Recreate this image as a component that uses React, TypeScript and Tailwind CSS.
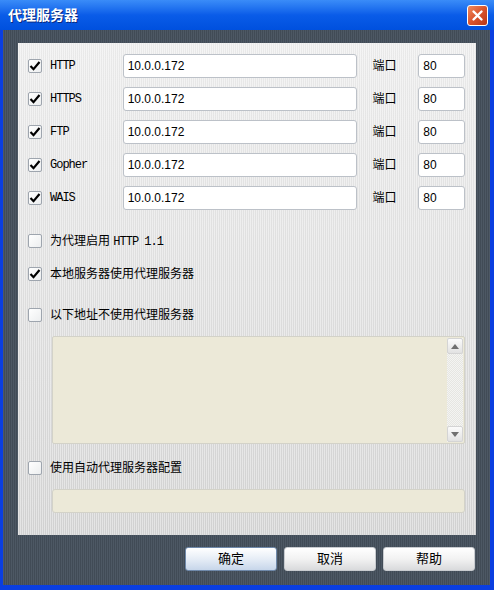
import React from 'react'

const cjk = 'font-["Liberation_Sans","Noto_Sans_CJK_SC",sans-serif]'
const mono = 'font-["Liberation_Mono","Noto_Sans_CJK_SC",monospace] text-[12px] tracking-[-1px]'

function Check({ on }: { on?: boolean }) {
  return (
    <div className="w-[14px] h-[14px] shrink-0 rounded-[2px] border border-[#9ea5ae] bg-gradient-to-br from-white to-[#eceeef] flex items-center justify-center">
      {on && (
        <svg width="12" height="12" viewBox="0 0 12 12">
          <path d="M1.5 6 L4.5 9.2 L10.5 2" fill="none" stroke="#000" strokeWidth="2.2" />
        </svg>
      )}
    </div>
  )
}

function Field({ value, className }: { value?: string; className: string }) {
  return (
    <div className={`h-6 rounded-[3px] border border-[#bcc1c8] bg-white flex items-center px-[4px] text-[12px] text-black ${cjk} ${className}`}>
      {value}
    </div>
  )
}

function Btn({ label, main }: { label: string; main?: boolean }) {
  return (
    <div
      className={`w-[92px] h-6 rounded-[3px] border flex items-center justify-center text-[13px] text-black ${cjk} ${
        main
          ? 'border-[#6f89aa] bg-gradient-to-b from-white via-[#e6edf6] to-[#c7d6ea]'
          : 'border-[#c8cbcf] bg-gradient-to-b from-white via-[#f2f2f2] to-[#d9dadc]'
      }`}
    >
      {label}
    </div>
  )
}

const protocols = ['HTTP', 'HTTPS', 'FTP', 'Gopher', 'WAIS']

export default function App() {
  return (
    <div className="w-[494px] h-[590px] flex flex-col bg-[#0a3ee0] select-none">
      <div className="h-[30px] shrink-0 flex items-center justify-between pl-2 pr-[6px] bg-gradient-to-b from-[#3a8cf8] via-[#0a5ce8] to-[#0050de]">
        <span className={`text-[14px] font-bold text-white [text-shadow:1px_1px_0_#0a2a80] ${cjk}`}>代理服务器</span>
        <div className="w-[21px] h-[21px] rounded-[3px] border border-white bg-gradient-to-br from-[#f08a5c] via-[#d9532c] to-[#b83615] flex items-center justify-center">
          <svg width="13" height="13" viewBox="0 0 13 13">
            <path d="M2.5 2.5 L10.5 10.5 M10.5 2.5 L2.5 10.5" stroke="#fff" strokeWidth="2.4" strokeLinecap="round" />
          </svg>
        </div>
      </div>

      <div className="flex-1 ml-[3px] mr-[4px] mb-[5px] flex flex-col pt-[13px] pl-[15px] pr-[14px] bg-[repeating-linear-gradient(90deg,#4d5864_0px,#4d5864_1px,#414b56_1px,#414b56_2px)]">
        <div className="h-[492px] shrink-0 flex flex-col pt-[11px] pl-[10px] pr-[11px] bg-[repeating-linear-gradient(90deg,rgba(255,255,255,0.35)_0px,rgba(255,255,255,0.35)_1px,rgba(0,0,0,0.025)_1px,rgba(0,0,0,0.025)_2px),linear-gradient(180deg,#efefef,#d6d6d6)]">
          <div className="flex flex-col gap-[9px]">
            {protocols.map((p) => (
              <div key={p} className="flex items-center h-6">
                <Check on />
                <span className={`ml-2 w-[73px] text-black ${mono}`}>{p}</span>
                <Field value="10.0.0.172" className="w-[236px]" />
                <span className={`ml-[15px] w-[46px] text-[12px] text-black ${cjk}`}>端口</span>
                <Field value="80" className="w-[47px]" />
              </div>
            ))}
          </div>

          <div className="mt-[24px] flex items-center h-[14px]">
            <Check />
            <span className={`ml-2 text-[12px] text-black ${cjk}`}>
              为代理启用 <span className={mono}>HTTP 1.1</span>
            </span>
          </div>
          <div className="mt-[19px] flex items-center h-[14px]">
            <Check on />
            <span className={`ml-2 text-[12px] text-black ${cjk}`}>本地服务器使用代理服务器</span>
          </div>
          <div className="mt-[27px] flex items-center h-[14px]">
            <Check />
            <span className={`ml-2 text-[12px] text-black ${cjk}`}>以下地址不使用代理服务器</span>
          </div>

          <div className="mt-[14px] ml-[24px] h-[108px] rounded-[2px] border border-[#d3d2c8] bg-[#ece9d8] flex justify-end p-[1px]">
            <div className="w-4 flex flex-col justify-between bg-[repeating-conic-gradient(#f4f4f2_0%_25%,#e6e6e2_0%_50%)] bg-[length:2px_2px]">
              <div className="h-4 rounded-[2px] border border-[#d4d4d4] bg-gradient-to-b from-[#fbfbfb] to-[#e2e2e2] flex items-center justify-center">
                <svg width="8" height="5" viewBox="0 0 8 5"><path d="M0 5 L4 0 L8 5 Z" fill="#707070" /></svg>
              </div>
              <div className="h-4 rounded-[2px] border border-[#d4d4d4] bg-gradient-to-b from-[#fbfbfb] to-[#e2e2e2] flex items-center justify-center">
                <svg width="8" height="5" viewBox="0 0 8 5"><path d="M0 0 L4 5 L8 0 Z" fill="#707070" /></svg>
              </div>
            </div>
          </div>

          <div className="mt-[17px] flex items-center h-[14px]">
            <Check />
            <span className={`ml-2 text-[12px] text-black ${cjk}`}>使用自动代理服务器配置</span>
          </div>
          <div className="mt-[14px] ml-[24px] h-6 rounded-[3px] border border-[#d3d2c8] bg-[#ece9d8]" />
        </div>

        <div className="flex-1 flex justify-end items-start pt-[12px] gap-[7px] pr-[1px]">
          <Btn label="确定" main />
          <Btn label="取消" />
          <Btn label="帮助" />
        </div>
      </div>
    </div>
  )
}
